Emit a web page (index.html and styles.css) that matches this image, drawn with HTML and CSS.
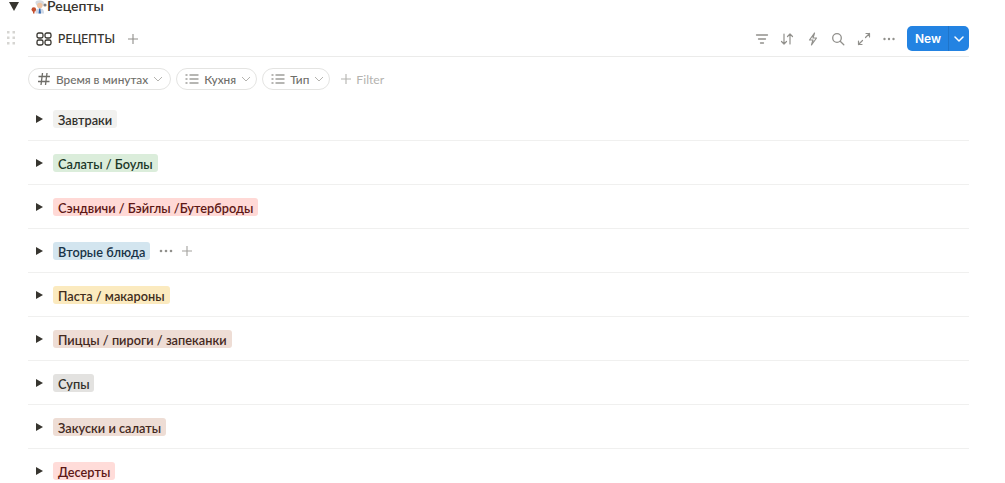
FILE: index.html
```html
<!DOCTYPE html>
<html lang="en">
<head>
  <meta charset="UTF-8" />
  <title>Рецепты</title>
  <link rel="stylesheet" href="styles.css">
</head>
<body>
  <div class="page-title">
    <svg class="toggle-big" width="10" height="9" viewBox="0 0 10 9"><path d="M0 0h10L5 9z" fill="#37352f"/></svg>
    <svg class="chef" width="16" height="16" viewBox="0 0 16 16">
      <path d="M4.500 5C3.500 1.500 13 1 13 5L12 7.500H5.500z" fill="#d5dae0"/>
      <circle cx="8.800" cy="7.500" r="2.800" fill="#eec3a3"/>
      <path d="M4.500 15.500c0-4 1.500-5 4.300-5s4.200 1 4.200 5z" fill="#cfd8e6"/>
      <path d="M8.200 10.500h1.200l.6 5H7.600z" fill="#2f66b0"/>
      <circle cx="2.800" cy="11.500" r="2.300" fill="#c4502f"/>
      <rect x="2" y="12" width="1.500" height="3.500" fill="#c4502f"/>
      <circle cx="14" cy="7" r="1.600" fill="#7f8082"/>
    </svg>
    <span>Рецепты</span>
  </div>

  <div class="tabs">
    <svg class="drag" width="8" height="14" viewBox="0 0 8 14" fill="#d6d5d2">
      <rect x="0" y="0" width="2.500" height="2.500"/><rect x="5.500" y="0" width="2.500" height="2.500"/>
      <rect x="0" y="5.500" width="2.500" height="2.500"/><rect x="5.500" y="5.500" width="2.500" height="2.500"/>
      <rect x="0" y="11" width="2.500" height="2.500"/><rect x="5.500" y="11" width="2.500" height="2.500"/>
    </svg>
    <div class="tabs-inner">
      <svg width="16" height="14" viewBox="0 0 16 14" fill="none" stroke="#37352f" stroke-width="1.300">
        <rect x="1" y="1" width="6" height="5" rx="1.800"/><rect x="9" y="1" width="6" height="5" rx="1.800"/>
        <rect x="1" y="8" width="6" height="5" rx="1.800"/><rect x="9" y="8" width="6" height="5" rx="1.800"/>
      </svg>
      <span class="tab-name">РЕЦЕПТЫ</span>
      <svg class="tab-add" width="12" height="12" viewBox="0 0 12 12" stroke="#8f8e8a" stroke-width="1.100"><path d="M6 1v10M1 6h10"/></svg>
      <div class="tools">
        <svg width="14" height="14" viewBox="0 0 14 14" stroke="#91908c" stroke-width="1.300" stroke-linecap="round"><path d="M1.500 3h11M3.500 7h7M5.500 11h3"/></svg>
        <svg width="14" height="14" viewBox="0 0 14 14" fill="none" stroke="#91908c" stroke-width="1.200" stroke-linecap="round" stroke-linejoin="round"><path d="M4 2v10M1.500 9.500 4 12l2.500-2.500M10 12V2M7.500 4.500 10 2l2.500 2.500"/></svg>
        <svg width="14" height="14" viewBox="0 0 14 14" fill="none" stroke="#91908c" stroke-width="1.200" stroke-linejoin="round"><path d="M8.500 1 3.500 8H7l-1.500 5 5-7H7z"/></svg>
        <svg width="14" height="14" viewBox="0 0 14 14" fill="none" stroke="#91908c" stroke-width="1.300" stroke-linecap="round"><circle cx="6" cy="6" r="4.300"/><path d="m9.200 9.200 3.600 3.600"/></svg>
        <svg width="14" height="14" viewBox="0 0 14 14" fill="none" stroke="#91908c" stroke-width="1.200" stroke-linecap="round" stroke-linejoin="round"><path d="M8.500 5.500 12.500 1.500M9 1.500h3.500V5M5.500 8.500l-4 4M5 12.500H1.500V9"/></svg>
        <svg width="14" height="14" viewBox="0 0 14 14" fill="#91908c"><circle cx="2.500" cy="7" r="1.200"/><circle cx="7" cy="7" r="1.200"/><circle cx="11.500" cy="7" r="1.200"/></svg>
      </div>
      <div class="new-btn">
        <span class="new-label">New</span>
        <span class="new-arrow"><svg width="10" height="6" viewBox="0 0 10 6" fill="none" stroke="#fff" stroke-width="1.500" stroke-linecap="round" stroke-linejoin="round"><path d="m1 1 4 4 4-4"/></svg></span>
      </div>
    </div>
  </div>

  <div class="filters">
    <div class="pill pill-wide">
      <svg width="14" height="14" viewBox="0 0 14 14" stroke="#6f6e69" stroke-width="1.300"><path d="M5.500 1 4 13M10 1 8.500 13M1.500 4.500h11.500M1 9.500h11.500"/></svg>
      <span>Время в минутах</span>
      <svg class="chev" width="10" height="6" viewBox="0 0 10 6" fill="none" stroke="#b4b3af" stroke-width="1"><path d="m1 1 4 4 4-4"/></svg>
    </div>
    <div class="pill">
      <svg width="14" height="12" viewBox="0 0 14 12" stroke="#6f6e69" stroke-width="1.200"><path d="M.5 2h2M.5 6h2M.5 10h2M4.500 2h9M4.500 6h9M4.500 10h9"/></svg>
      <span>Кухня</span>
      <svg class="chev" width="10" height="6" viewBox="0 0 10 6" fill="none" stroke="#b4b3af" stroke-width="1"><path d="m1 1 4 4 4-4"/></svg>
    </div>
    <div class="pill">
      <svg width="14" height="12" viewBox="0 0 14 12" stroke="#6f6e69" stroke-width="1.200"><path d="M.5 2h2M.5 6h2M.5 10h2M4.500 2h9M4.500 6h9M4.500 10h9"/></svg>
      <span>Тип</span>
      <svg class="chev" width="10" height="6" viewBox="0 0 10 6" fill="none" stroke="#b4b3af" stroke-width="1"><path d="m1 1 4 4 4-4"/></svg>
    </div>
    <div class="add-filter">
      <svg width="10" height="10" viewBox="0 0 10 10" stroke="#b4b3af" stroke-width="1.100"><path d="M5 0v10M0 5h10"/></svg>
      <span>Filter</span>
    </div>
  </div>

  <div class="groups">
    <div class="group">
      <svg class="arrow" width="7" height="8" viewBox="0 0 7 8"><path d="M0 0l7 4-7 4z" fill="#37352f"/></svg>
      <span class="tag tag-gray">Завтраки</span>
    </div>
    <div class="group">
      <svg class="arrow" width="7" height="8" viewBox="0 0 7 8"><path d="M0 0l7 4-7 4z" fill="#37352f"/></svg>
      <span class="tag tag-green">Салаты / Боулы</span>
    </div>
    <div class="group">
      <svg class="arrow" width="7" height="8" viewBox="0 0 7 8"><path d="M0 0l7 4-7 4z" fill="#37352f"/></svg>
      <span class="tag tag-red">Сэндвичи / Бэйглы /Бутерброды</span>
    </div>
    <div class="group">
      <svg class="arrow" width="7" height="8" viewBox="0 0 7 8"><path d="M0 0l7 4-7 4z" fill="#37352f"/></svg>
      <span class="tag tag-blue">Вторые блюда</span>
      <svg class="group-more" width="14" height="4" viewBox="0 0 14 4" fill="#91908c"><circle cx="2" cy="2" r="1.300"/><circle cx="7" cy="2" r="1.300"/><circle cx="12" cy="2" r="1.300"/></svg>
      <svg class="group-add" width="10" height="10" viewBox="0 0 10 10" stroke="#a3a29e" stroke-width="1.100"><path d="M5 0v10M0 5h10"/></svg>
    </div>
    <div class="group">
      <svg class="arrow" width="7" height="8" viewBox="0 0 7 8"><path d="M0 0l7 4-7 4z" fill="#37352f"/></svg>
      <span class="tag tag-yellow">Паста / макароны</span>
    </div>
    <div class="group">
      <svg class="arrow" width="7" height="8" viewBox="0 0 7 8"><path d="M0 0l7 4-7 4z" fill="#37352f"/></svg>
      <span class="tag tag-brown">Пиццы / пироги / запеканки</span>
    </div>
    <div class="group">
      <svg class="arrow" width="7" height="8" viewBox="0 0 7 8"><path d="M0 0l7 4-7 4z" fill="#37352f"/></svg>
      <span class="tag tag-darkgray">Супы</span>
    </div>
    <div class="group">
      <svg class="arrow" width="7" height="8" viewBox="0 0 7 8"><path d="M0 0l7 4-7 4z" fill="#37352f"/></svg>
      <span class="tag tag-brown">Закуски и салаты</span>
    </div>
    <div class="group">
      <svg class="arrow" width="7" height="8" viewBox="0 0 7 8"><path d="M0 0l7 4-7 4z" fill="#37352f"/></svg>
      <span class="tag tag-red2">Десерты</span>
    </div>
  </div>
</body>
</html>
```

FILE: styles.css
```css
html, body {
  height: 483px;
  overflow: hidden;
}
* {
  box-sizing: border-box;
}
body {
  font-family: Lato, Inter, sans-serif;
  background: #fff;
  color: #37352f;
  margin: 0;
  padding: 0 36px 0 0;
}
.page-title {
  display: flex;
  align-items: center;
  height: 12px;
  line-height: 12px;
  padding-left: 9px;
  font-size: 14px;
  font-weight: 600;
}
.toggle-big {
  margin-right: 12px;
  flex: none;
}
.chef {
  flex: none;
}
.tabs {
  display: flex;
  align-items: center;
  padding-left: 7px;
  margin-top: 7px;
}
.drag {
  margin-right: 13px;
  flex: none;
}
.tabs-inner {
  flex: 1;
  display: flex;
  align-items: center;
  height: 38px;
  padding: 2px 0 0 8px;
  border-bottom: 1px solid #ebebea;
}
.tab-name {
  font-family: Inter, sans-serif;
  font-size: 11.700px;
  font-weight: 500;
  margin-left: 6px;
}
.tab-add {
  margin-left: 12px;
}
.tools {
  margin-left: auto;
  display: flex;
  align-items: center;
  gap: 11.400px;
}
.new-btn {
  display: flex;
  align-items: stretch;
  height: 25px;
  margin-left: 11px;
  background: #2383e2;
  border-radius: 5px;
  color: #fff;
  font-family: Inter, sans-serif;
  font-size: 12px;
  font-weight: 600;
}
.new-label {
  display: flex;
  align-items: center;
  padding: 0 7px 0 8px;
}
.new-arrow {
  display: flex;
  align-items: center;
  padding: 0 5px;
  border-left: 1px solid #1f74c9;
}
.filters {
  display: flex;
  align-items: center;
  gap: 5px;
  padding: 11px 0 0 28px;
}
.pill {
  display: flex;
  align-items: center;
  gap: 5px;
  height: 22px;
  padding: 0 5px 0 8px;
  border: 1px solid #e4e4e2;
  border-radius: 11px;
  font-size: 11.800px;
  font-weight: 500;
  color: #6f6e69;
}
.pill-wide {
  padding-right: 7px;
}
.add-filter {
  display: flex;
  align-items: center;
  gap: 5px;
  margin-left: 6px;
  font-size: 12.200px;
  color: #b4b3af;
}
.groups {
  margin-left: 28px;
  margin-top: 7px;
}
.group {
  display: flex;
  align-items: center;
  height: 44px;
  padding: 1px 0 0 8px;
  border-bottom: 1px solid #f0f0ef;
}
.group:last-child {
  border-bottom-color: transparent;
}
.arrow {
  margin-right: 10px;
}
.tag {
  display: inline-block;
  padding: 0 5px;
  height: 18px;
  line-height: 20px;
  border-radius: 3px;
  font-size: 12.750px;
  font-weight: 600;
  white-space: nowrap;
}
.tag-gray { background: #f1f1ef; color: #32302c; }
.tag-green { background: #dbeddb; color: #1c3829; }
.tag-red { background: #ffd9d6; color: #5d1715; }
.tag-red2 { background: #ffdcd9; color: #5d1715; }
.tag-blue { background: #d3e5ef; color: #183347; }
.tag-yellow { background: #fbeabf; color: #402c1b; }
.tag-brown { background: #eeddd5; color: #44291e; }
.tag-darkgray { background: #e3e2e0; color: #32302c; }
.group-more {
  margin-left: 9px;
}
.group-add {
  margin-left: 9px;
}
```
